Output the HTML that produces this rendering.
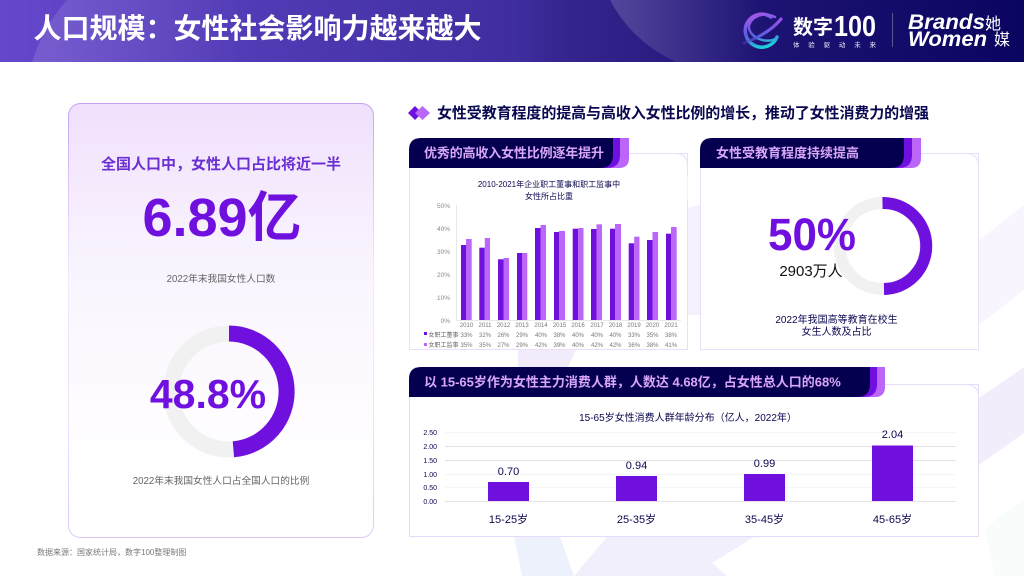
<!DOCTYPE html>
<html lang="zh"><head><meta charset="utf-8"><title>人口规模</title>
<style>
html,body{margin:0;padding:0;background:#fff;width:1024px;height:576px;overflow:hidden}
svg{display:block}
text{font-family:"Liberation Sans","Noto Sans CJK SC",sans-serif}
.n{font-family:"Noto Sans CJK SC",sans-serif}
.b{font-weight:700}
.tab{font-size:13px;font-weight:700;fill:#d9a6f8}
.t7{font-size:6px;fill:#777;text-anchor:middle}
.ax{font-size:6.5px;fill:#888;text-anchor:end}
.ax2{font-size:7px;fill:#0a0850;text-anchor:end}
.val{font-size:11px;fill:#0a0850;text-anchor:middle}
</style></head><body>
<svg width="1024" height="576" viewBox="0 0 1024 576" xmlns="http://www.w3.org/2000/svg">
<defs>
<linearGradient id="hd" x1="0" x2="1" y1="0" y2="0"><stop offset="0" stop-color="#6547cb"/><stop offset=".5" stop-color="#3f2ea0"/><stop offset=".55" stop-color="#35258e"/><stop offset=".76" stop-color="#1c1272"/><stop offset="1" stop-color="#0a0560"/></linearGradient>
<linearGradient id="card" x1="0" x2="0" y1="0" y2="1"><stop offset="0" stop-color="#f0e0fc"/><stop offset=".35" stop-color="#f9f3fe"/><stop offset=".7" stop-color="#fefcff"/><stop offset="1" stop-color="#fff"/></linearGradient>
<linearGradient id="cb" x1="0" x2="0" y1="0" y2="1"><stop offset="0" stop-color="#c8a0f6"/><stop offset=".4" stop-color="#f3eafd"/><stop offset=".7" stop-color="#efe4fc"/><stop offset="1" stop-color="#dcc8fa"/></linearGradient>
<linearGradient id="g1" gradientUnits="userSpaceOnUse" x1="755" x2="765" y1="12" y2="48"><stop offset="0" stop-color="#a858ea"/><stop offset=".55" stop-color="#5a5ce0"/><stop offset="1" stop-color="#18d8d8"/></linearGradient>
<linearGradient id="g2" gradientUnits="userSpaceOnUse" x1="782" x2="742" y1="18" y2="44"><stop offset="0" stop-color="#9a50e8"/><stop offset=".6" stop-color="#5a5ce0"/><stop offset="1" stop-color="#4a40c0" stop-opacity=".3"/></linearGradient>
<linearGradient id="lg1" gradientUnits="userSpaceOnUse" x1="608" x2="760" y1="0" y2="0"><stop offset="0" stop-color="#fff" stop-opacity=".17"/><stop offset="1" stop-color="#fff" stop-opacity="0"/></linearGradient>
<linearGradient id="lg2" gradientUnits="userSpaceOnUse" x1="48" x2="250" y1="0" y2="0"><stop offset="0" stop-color="#fff" stop-opacity=".12"/><stop offset="1" stop-color="#fff" stop-opacity="0"/></linearGradient>
<clipPath id="hc"><rect width="1024" height="62"/></clipPath>
</defs>

<!-- background shapes -->
<path d="M688 208C692 207 696 205 700 205L700 315L688 315Z" fill="#f6effd"/>
<path d="M979 240L1024 205L1024 290L979 325Z" fill="#f9f5fe"/>
<path d="M518 350L576 350L568 367L518 367Z" fill="#f2ebfb"/>
<path d="M979 398L1024 367L1024 433L979 465Z" fill="#f3ecfb"/>
<path d="M514 537L560 537L574 576L522 576Z" fill="#edf1fb"/>
<path d="M607 537L754 537L712 563L727 576L574 576Z" fill="#f2effc"/>
<path d="M985 530Q1005 510 1024 500L1024 576L995 576Z" fill="#f8fcfa"/>

<!-- header -->
<rect width="1024" height="62" fill="url(#hd)"/>
<g clip-path="url(#hc)">
<circle cx="730" cy="-62" r="135" fill="url(#lg1)"/>
<circle cx="190" cy="110" r="165" fill="url(#lg2)"/>
</g>
<text x="33.500" y="38" font-size="28" class="b" fill="#fff">人口规模：女性社会影响力越来越大</text>

<!-- logo -->
<g fill="none" stroke-linecap="round">
<path d="M771 17A16.500 16.500 0 1 0 777 37" stroke="url(#g1)" stroke-width="3.500"/>
<path d="M775 17C760 10 748 20 749 28C750 37 766 45 777 38" stroke="url(#g1)" stroke-width="2.500"/>
<path d="M781 19C773 29 760 37 744 43" stroke="url(#g2)" stroke-width="3.200"/>
</g>
<text x="793" y="34" font-size="20" class="n" font-weight="700" fill="#fff">数字</text>
<text x="834" y="36" font-size="29" font-weight="700" fill="#fff" textLength="42" lengthAdjust="spacingAndGlyphs">100</text>
<text x="793" y="47" font-size="6.500" fill="#e8e8f8" textLength="83">体 验 驱 动 未 来</text>
<rect x="892" y="13" width="1" height="34" fill="#5a5a90"/>
<text x="908" y="29" font-size="21" font-weight="700" font-style="italic" fill="#fff" textLength="77" lengthAdjust="spacingAndGlyphs">Brands</text>
<text x="908" y="46" font-size="21" font-weight="700" font-style="italic" fill="#fff" textLength="79" lengthAdjust="spacingAndGlyphs">Women</text>
<text x="985" y="29" font-size="16" fill="#fff">她</text>
<text x="994" y="45" font-size="16" fill="#fff">媒</text>

<!-- left card -->
<rect x="68.500" y="103.500" width="305" height="434" rx="12" fill="url(#card)" stroke="url(#cb)"/>
<text x="221" y="169" font-size="15" class="b" fill="#6a2fd2" text-anchor="middle">全国人口中，女性人口占比将近一半</text>
<text x="222" y="236" font-size="54" font-weight="700" fill="#6f10df" text-anchor="middle">6.89亿</text>
<text x="221" y="282" font-size="9.700" fill="#666" text-anchor="middle">2022年末我国女性人口数</text>
<circle cx="229" cy="391.500" r="58" fill="none" stroke="#f1f1f1" stroke-width="16"/>
<path d="M229 333.500A58 58 0 0 1 233.400 449.300" fill="none" stroke="#6f10df" stroke-width="16"/>
<text x="208" y="408" font-size="41" font-weight="700" fill="#6f10df" text-anchor="middle">48.8%</text>
<text x="221" y="484" font-size="9.700" fill="#666" text-anchor="middle">2022年末我国女性人口占全国人口的比例</text>
<text x="37" y="555" font-size="8" fill="#777">数据来源：国家统计局，数字100整理制图</text>

<!-- section heading -->
<path d="M408 113L415 106L422 113L415 120Z" fill="#6f10df"/>
<path d="M415 113L422.500 106L430 113L422.500 120Z" fill="#bb66f8"/>
<text x="437" y="118" font-size="15" class="b" fill="#0a0850" textLength="492">女性受教育程度的提高与高收入女性比例的增长，推动了女性消费力的增强</text>

<!-- card 2 -->
<rect x="409.500" y="153.500" width="278" height="196" rx="0" fill="#fff" stroke="#eadffb"/>
<path d="M640 153.500H675Q687.500 153.500 687.500 166V200H640Z" fill="#fff" stroke="none"/>
<path d="M640 153.500H675Q687.500 153.500 687.500 166V175" fill="none" stroke="#eadffb"/>
<path d="M609 138H629V158Q629 168 619 168H609Z" fill="#bb66f8"/>
<path d="M600 138H620V155Q620 168 607 168H600Z" fill="#7010e0"/>
<path d="M421 138H613V155Q613 168 600 168H409V150Q409 138 421 138Z" fill="#04004f"/>
<text x="424" y="157.500" class="tab" textLength="180">优秀的高收入女性比例逐年提升</text>

<text x="549" y="187" font-size="8" fill="#0a0850" text-anchor="middle">2010-2021年企业职工董事和职工监事中</text>
<text x="549" y="199" font-size="8" fill="#0a0850" text-anchor="middle">女性所占比重</text>
<rect x="456" y="205" width="1" height="115" fill="#e8e8e8"/>
<rect x="456" y="320" width="225" height="1" fill="#e8e8e8"/>
<g class="ax">
<text x="450" y="208" class="ax">50%</text><text x="450" y="231" class="ax">40%</text><text x="450" y="254" class="ax">30%</text><text x="450" y="277" class="ax">20%</text><text x="450" y="300" class="ax">10%</text><text x="450" y="323" class="ax">0%</text>
</g>
<g fill="#6f10df">
<rect x="461" y="245" width="5" height="75"/><rect x="479.300" y="247.700" width="5.500" height="72.300"/><rect x="498" y="259.300" width="5.500" height="60.700"/><rect x="517" y="253" width="5" height="67"/><rect x="535" y="228" width="5.500" height="92"/><rect x="554" y="232" width="5" height="88"/><rect x="572.700" y="228.700" width="5.500" height="91.300"/><rect x="591" y="229" width="5.500" height="91"/><rect x="610" y="228.700" width="5" height="91.300"/><rect x="628.700" y="243.300" width="5.500" height="76.700"/><rect x="647" y="240" width="5.500" height="80"/><rect x="666" y="233.700" width="5" height="86.300"/>
</g>
<g fill="#bb66f8">
<rect x="466" y="239" width="5.700" height="81"/><rect x="484.800" y="238" width="5.200" height="82"/><rect x="503.500" y="258" width="5.500" height="62"/><rect x="522" y="253" width="5.300" height="67"/><rect x="540.500" y="225" width="5.500" height="95"/><rect x="559" y="231" width="6" height="89"/><rect x="578.200" y="228" width="5.300" height="92"/><rect x="596.500" y="224.300" width="5.500" height="95.700"/><rect x="615" y="224" width="6" height="96"/><rect x="634.200" y="236.700" width="5.300" height="83.300"/><rect x="652.500" y="232" width="5.500" height="88"/><rect x="671" y="227" width="5.700" height="93"/>
</g>
<g class="t7">
<text x="466.500" y="327" class="t7">2010</text><text x="485" y="327" class="t7">2011</text><text x="503.500" y="327" class="t7">2012</text><text x="522" y="327" class="t7">2013</text><text x="541" y="327" class="t7">2014</text><text x="559.500" y="327" class="t7">2015</text><text x="578" y="327" class="t7">2016</text><text x="597" y="327" class="t7">2017</text><text x="615.500" y="327" class="t7">2018</text><text x="634" y="327" class="t7">2019</text><text x="652.500" y="327" class="t7">2020</text><text x="671" y="327" class="t7">2021</text>
<text x="466.500" y="337" class="t7">33%</text><text x="485" y="337" class="t7">32%</text><text x="503.500" y="337" class="t7">26%</text><text x="522" y="337" class="t7">29%</text><text x="541" y="337" class="t7">40%</text><text x="559.500" y="337" class="t7">38%</text><text x="578" y="337" class="t7">40%</text><text x="597" y="337" class="t7">40%</text><text x="615.500" y="337" class="t7">40%</text><text x="634" y="337" class="t7">33%</text><text x="652.500" y="337" class="t7">35%</text><text x="671" y="337" class="t7">38%</text>
<text x="466.500" y="347" class="t7">35%</text><text x="485" y="347" class="t7">35%</text><text x="503.500" y="347" class="t7">27%</text><text x="522" y="347" class="t7">29%</text><text x="541" y="347" class="t7">42%</text><text x="559.500" y="347" class="t7">39%</text><text x="578" y="347" class="t7">40%</text><text x="597" y="347" class="t7">42%</text><text x="615.500" y="347" class="t7">42%</text><text x="634" y="347" class="t7">36%</text><text x="652.500" y="347" class="t7">38%</text><text x="671" y="347" class="t7">41%</text>
</g>
<rect x="424" y="332" width="3" height="3" fill="#6f10df"/><text x="428.500" y="337" font-size="6" fill="#666">女职工董事</text>
<rect x="424" y="343" width="3" height="3" fill="#bb66f8"/><text x="428.500" y="347" font-size="6" fill="#666">女职工监事</text>

<!-- card 3 -->
<rect x="700.500" y="153.500" width="278" height="196" fill="#fff" stroke="#eadffb"/>
<path d="M925 153.500H966Q978.500 153.500 978.500 166V175H925Z" fill="#fff"/>
<path d="M925 153.500H966Q978.500 153.500 978.500 166V175" fill="none" stroke="#eadffb"/>
<path d="M901 138H921V158Q921 168 911 168H901Z" fill="#bb66f8"/>
<path d="M893 138H912V155Q912 168 899 168H893Z" fill="#7010e0"/>
<path d="M712 138H904V155Q904 168 891 168H700V150Q700 138 712 138Z" fill="#04004f"/>
<text x="716" y="157.500" class="tab">女性受教育程度持续提高</text>
<circle cx="882.500" cy="246" r="43" fill="none" stroke="#f1f1f1" stroke-width="12"/>
<path d="M882.500 203A43 43 0 0 1 884 289" fill="none" stroke="#6f10df" stroke-width="12"/>
<text x="812" y="250" font-size="45" font-weight="700" fill="#6f10df" text-anchor="middle" textLength="88" lengthAdjust="spacingAndGlyphs">50%</text>
<text x="811" y="276" font-size="15" fill="#111" text-anchor="middle">2903万人</text>
<text x="836.500" y="323" font-size="10" fill="#0a0850" text-anchor="middle">2022年我国高等教育在校生</text>
<text x="836.500" y="335" font-size="10" fill="#0a0850" text-anchor="middle">女生人数及占比</text>

<!-- card 4 -->
<rect x="409.500" y="384.500" width="569" height="152" fill="#fff" stroke="#e6dafa"/>
<path d="M890 384.500H966Q978.500 384.500 978.500 397V405H890Z" fill="#fff"/>
<path d="M890 384.500H966Q978.500 384.500 978.500 397V405" fill="none" stroke="#eadffb"/>
<path d="M865 367H885V387Q885 397 875 397H865Z" fill="#bb66f8"/>
<path d="M857 367H877V384Q877 397 864 397H857Z" fill="#7010e0"/>
<path d="M421 367H870V384Q870 397 857 397H409V379Q409 367 421 367Z" fill="#04004f"/>
<text x="424" y="386.500" class="tab">以 15-65岁作为女性主力消费人群，人数达 4.68亿，占女性总人口的68%</text>
<text x="688" y="421" font-size="10" fill="#0a0850" text-anchor="middle">15-65岁女性消费人群年龄分布（亿人，2022年）</text>
<g fill="#f5f5f5"><rect x="445" y="432" width="511" height="1"/><rect x="445" y="487" width="511" height="1"/><rect x="445" y="474" width="511" height="1"/></g>
<g fill="#e2e2e2"><rect x="445" y="446" width="511" height="1"/><rect x="445" y="460" width="511" height="1"/><rect x="445" y="501" width="511" height="1"/></g>
<text x="437" y="435" class="ax2">2.50</text><text x="437" y="449" class="ax2">2.00</text><text x="437" y="463" class="ax2">1.50</text><text x="437" y="477" class="ax2">1.00</text><text x="437" y="490" class="ax2">0.50</text><text x="437" y="504" class="ax2">0.00</text>
<g fill="#6f10df"><rect x="488" y="482" width="41" height="19"/><rect x="616" y="476" width="41" height="25"/><rect x="744" y="474" width="41" height="27"/><rect x="872" y="445.500" width="41" height="55.500"/></g>
<text x="508.500" y="475" class="val">0.70</text><text x="636.500" y="469" class="val">0.94</text><text x="764.500" y="467" class="val">0.99</text><text x="892.500" y="438" class="val">2.04</text>
<text x="508.500" y="523" class="val">15-25岁</text><text x="636.500" y="523" class="val">25-35岁</text><text x="764.500" y="523" class="val">35-45岁</text><text x="892.500" y="523" class="val">45-65岁</text>
</svg>
</body></html>
